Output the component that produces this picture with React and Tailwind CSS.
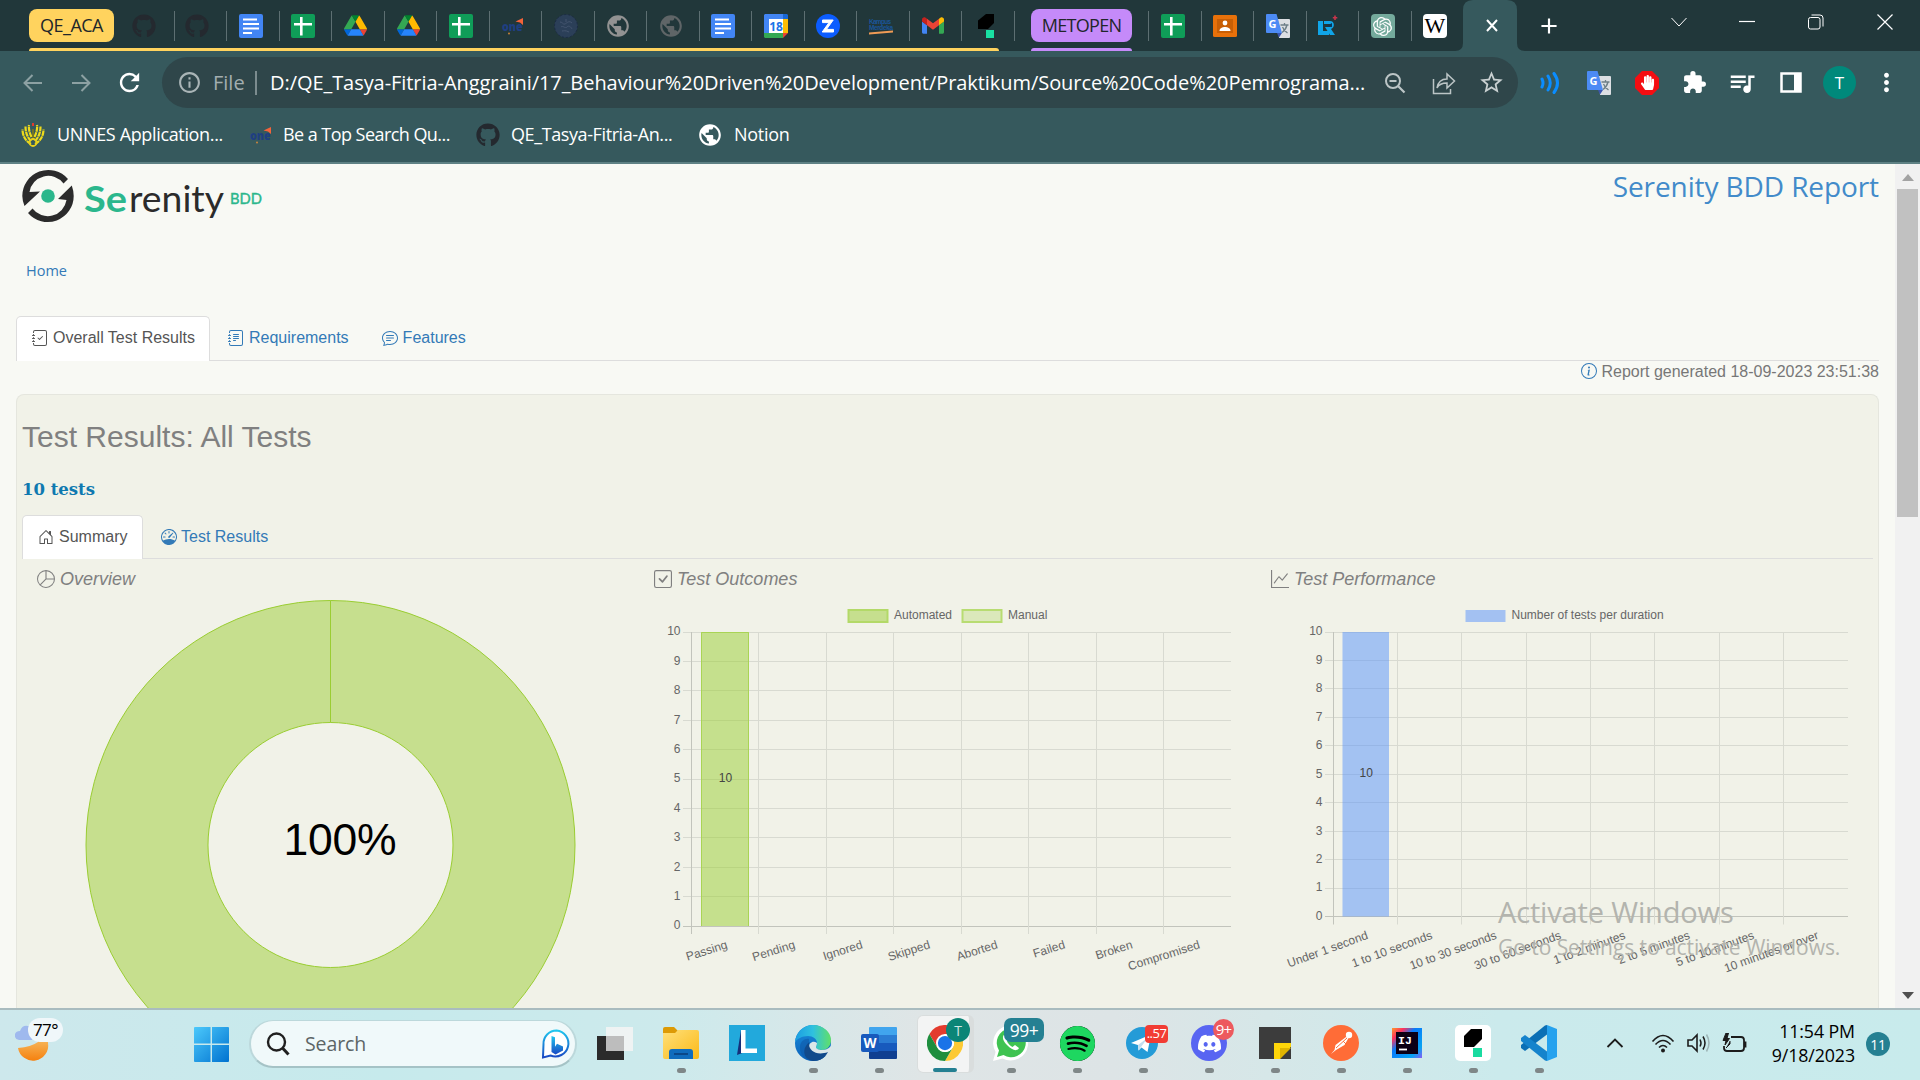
import React from "react";
import { FaGithub, FaHandPaper } from "react-icons/fa";
import {
  MdPublic, MdRefresh, MdInfoOutline, MdStarBorder, MdExtension, MdQueueMusic,
  MdMoreVert, MdAdd,
} from "react-icons/md";
import {
  BsJournalCheck, BsJournalText, BsChatText, BsHouseDoor, BsSpeedometer,
  BsPieChart, BsCheckSquare, BsGraphUp, BsInfoCircle,
} from "react-icons/bs";
import { SiOpenai, SiDiscord, SiSpotify } from "react-icons/si";

const SEGOE = "font-['Open_Sans','Noto_Sans',sans-serif]";
const ARIAL = "font-['Liberation_Sans',Arial,sans-serif]";

/* ---------- favicons ---------- */

const Docs = () => (
  <svg viewBox="0 0 24 24" className="size-6">
    <rect width="24" height="24" rx="2" fill="#4285f4" />
    <path d="M4 5.5h14M4 10h16M4 14.5h16M4 19h9" stroke="#fff" strokeWidth="2.2" />
  </svg>
);
const Sheets = () => (
  <svg viewBox="0 0 24 24" className="size-6">
    <rect width="24" height="24" rx="2" fill="#0f9d58" />
    <path d="M3 10.2h18M10.3 3v18.5" stroke="#fff" strokeWidth="2.6" />
  </svg>
);
const Drive = () => (
  <svg viewBox="0 0 87.3 78" className="w-[23px] h-[21px]">
    <path fill="#0066da" d="m6.6 66.85 3.85 6.65c.8 1.4 1.95 2.5 3.3 3.3l13.75-23.8h-27.5c0 1.55.4 3.1 1.2 4.5z" />
    <path fill="#34a853" d="m43.65 25-13.75-23.8c-1.35.8-2.5 1.9-3.3 3.3l-25.4 44a9.06 9.06 0 0 0 -1.2 4.5h27.5z" />
    <path fill="#ea4335" d="m73.55 76.8c1.35-.8 2.5-1.9 3.3-3.3l1.6-2.75 7.65-13.25c.8-1.4 1.2-2.95 1.2-4.5h-27.502l5.852 11.5z" />
    <path fill="#00832d" d="m43.65 25 13.75-23.8c-1.35-.8-2.9-1.2-4.5-1.2h-18.5c-1.6 0-3.15.45-4.5 1.2z" />
    <path fill="#2684fc" d="m59.8 53h-32.3l-13.75 23.8c1.35.8 2.9 1.2 4.5 1.2h50.8c1.6 0 3.15-.45 4.5-1.2z" />
    <path fill="#ffba00" d="m73.4 26.5-12.7-22c-.8-1.4-1.95-2.5-3.3-3.3l-13.75 23.8 16.15 28h27.45c0-1.55-.4-3.1-1.2-4.5z" />
  </svg>
);
const One = () => (
  <svg viewBox="0 0 24 24" className="size-6">
    <text x="1" y="16.5" fontFamily="Open Sans, sans-serif" fontWeight="800" fontSize="12.5" fill="#1f3f82" textLength="20.5" lengthAdjust="spacingAndGlyphs">one</text>
    <path d="M14.5 7.5l7.5-3.5v7l-3-2.5z" fill="#f4633a" />
    <circle cx="8" cy="19.5" r=".9" fill="#d98a3a" />
  </svg>
);
const Seal = () => (
  <svg viewBox="0 0 24 24" className="size-6">
    <circle cx="12" cy="12" r="11.5" fill="#2b3f58" stroke="#1d2c44" strokeDasharray="2 2" />
    <path d="M6 8c3 0 3 3 5 2s4-4 7-1M7 13c2-2 4 2 6 0s4 0 5 2M8 17c2 0 3-1 7 1M12 5v3" stroke="#44556f" fill="none" strokeWidth="1" />
  </svg>
);
const Calendar = () => (
  <svg viewBox="0 0 24 24" className="size-6">
    <path d="M1 0h18v5H5v14H0V1z" fill="#4285f4" />
    <path d="M19 0h4l1 1v4h-5z" fill="#1967d2" />
    <path d="M19 5h5v14h-5z" fill="#fbbc04" />
    <path d="M0 19h19v5H1l-1-1z" fill="#34a853" />
    <path d="M19 19h5l-5 5z" fill="#ea4335" />
    <path d="M5 5h14v14H5z" fill="#fff" />
    <text x="12" y="16.5" textAnchor="middle" fontFamily="Open Sans, sans-serif" fontWeight="bold" fontSize="12" fill="#1a73e8">18</text>
  </svg>
);
const Zoom = () => (
  <svg viewBox="0 0 24 24" className="size-6">
    <circle cx="12" cy="12" r="12" fill="#0b5cff" />
    <path d="M6.5 6h10.7l-6.7 9.4h7V18H6.2l6.8-9.4H6.5z" fill="#fff" stroke="#fff" strokeWidth="1" />
  </svg>
);
const Kampus = () => (
  <svg viewBox="0 0 26 24" className="h-6 w-[26px] shrink-0">
    <text x="1" y="10" fontFamily="Liberation Sans, sans-serif" fontWeight="bold" fontSize="6.5" fill="#1a5598" textLength="22">Kampus</text>
    <text x="1" y="15.5" fontFamily="Liberation Sans, sans-serif" fontWeight="bold" fontSize="6.5" fill="#1a5598" textLength="24">Merdeka</text>
    <path d="M1 18.5l24-2v2L1 20.5z" fill="#ef9b55" />
  </svg>
);
const Gmail = () => (
  <svg viewBox="52 42 88 66" className="w-[22px] h-[17px]">
    <path fill="#4285f4" d="M58 108h14V74L52 59v43c0 3.32 2.69 6 6 6" />
    <path fill="#34a853" d="M120 108h14c3.32 0 6-2.69 6-6V59l-20 15" />
    <path fill="#fbbc04" d="M120 48v26l20-15v-8c0-7.42-8.47-11.65-14.4-7.2" />
    <path fill="#ea4335" d="M72 74V48l24 18 24-18v26L96 92" />
    <path fill="#c5221f" d="M52 51v8l20 15V48l-5.6-4.2c-5.94-4.45-14.4-.22-14.4 7.2" />
  </svg>
);
const Katalon = () => (
  <svg viewBox="0 0 24 24" className="size-6">
    <path d="M12 0h8v9l-6 6H4V6.5z" fill="#000" />
    <path d="M12 16h8v8h-8z" fill="#19e0a2" />
  </svg>
);
const Classroom = () => (
  <svg viewBox="0 0 24 24" className="size-6">
    <rect y="1" width="24" height="22" rx="1.5" fill="#e8710a" />
    <rect x="4" y="5" width="16" height="14" fill="#c95f05" />
    <circle cx="12" cy="9" r="2.4" fill="#fff" />
    <path d="M6.5 17c0-3 3-4 5.5-4s5.5 1 5.5 4z" fill="#fff" />
  </svg>
);
const Translate = () => (
  <svg viewBox="0 0 24 24" className="size-6">
    <path d="M12 5h11a1 1 0 0 1 1 1v17a1 1 0 0 1-1 1H13z" fill="#dcdfe3" />
    <path d="M1 0h9.5l5.5 19H1a1 1 0 0 1-1-1V1a1 1 0 0 1 1-1z" fill="#4c8bf5" />
    <path d="M11 19h5l-3 4.5z" fill="#3a56b0" />
    <text x="2.5" y="13.5" fontFamily="Open Sans, sans-serif" fontWeight="bold" fontSize="11" fill="#fff">G</text>
    <path d="M14.5 11h8M18.5 9v2M21 11c-.8 3.5-3 6-5 7.5M16.5 13c1 2.5 3 4.500 5 6" stroke="#6d7f88" strokeWidth="1.3" fill="none" />
  </svg>
);
const RLogo = () => (
  <svg viewBox="0 0 24 24" className="size-6">
    <path d="M0 7h5v10h6v4H0zM6 7h6c5 0 5 7 1 8l4 6h-5l-5-8h5c2 0 2-3 0-3H6z" fill="#10a5e8" />
    <path d="M9 12l5-3v4z" fill="#0b3557" />
    <path d="M17 1.5v4.5M14.8 3.7h4.5" stroke="#c8354b" strokeWidth="1.6" />
  </svg>
);
const ChatGpt = () => (
  <div className="flex size-6 items-center justify-center rounded-[4px] rounded-br-none bg-[#74aa9c] text-white">
    <SiOpenai size={19} />
  </div>
);
const Wiki = () => (
  <div className="-ml-px flex size-6 items-center justify-center rounded-[4px] bg-white font-['Liberation_Serif',serif] text-[22px] leading-none tracking-tight text-black">
    W
  </div>
);
const Unnes = () => (
  <svg viewBox="0 0 24 24" className="size-6">
    <path d="M10 21C4 18 1.5 12 1.5 6.5M10 18C6 14 4.5 9 4.5 3.5M10.5 14C8.5 10 7.5 6 8 2M14 21c6-3 8.5-9 8.5-14.5M14 18c4-4 5.5-9 5.5-14.5M13.5 14C15.5 10 16.5 6 16 2" stroke="#eedb1c" strokeWidth="2.2" strokeDasharray="5 .6" fill="none" />
    <path d="M12 6v11" stroke="#8a7d12" strokeWidth="1.5" />
    <circle cx="12" cy="19.5" r="3.5" fill="none" stroke="#e8cf1c" strokeWidth="1.8" />
    <path d="M11 0h2v3h-2z" fill="#e23b2e" />
  </svg>
);

/* ---------- browser chrome ---------- */

const gh = <FaGithub size={24} className="shrink-0 text-[#24292f]" />;
const ghTab = <FaGithub size={24} className="mr-[3px] shrink-0 text-[#24292f]" />;
const tabsA = [
  ghTab, ghTab, <Docs />, <Sheets />, <Drive />, <Drive />, <Sheets />, <One />, <Seal />,
  <MdPublic size={26} className="shrink-0 text-[#929292]" />,
  <MdPublic size={26} className="shrink-0 text-[#5f6567]" />,
  <Docs />, <Calendar />, <Zoom />, <Kampus />, <Gmail />, <Katalon />,
];
const tabsB = [<Sheets />, <Classroom />, <Translate />, <RLogo />, <ChatGpt />, <Wiki />];

function Tab({ children, last }) {
  return (
    <div className={`flex h-[30px] w-[52.5px] shrink-0 items-center border-r pl-[11.5px] ${last ? "border-transparent" : "border-[#5d6f72]"}`}>
      <div className="flex w-6 justify-center">{children}</div>
    </div>
  );
}

function TabStrip() {
  return (
    <div className="flex h-[51px] items-start bg-[#21373a]">
      <div className="ml-[29px] flex h-[51px] w-[970px] shrink-0 flex-col justify-between">
        <div className="flex items-center pt-[9px]">
          <div className={`${SEGOE} mr-[8px] flex h-[33px] w-[85px] shrink-0 items-center justify-center rounded-[8px] bg-[#ffd35e] text-[18px] tracking-[-0.5px] text-[#21262a]`}>
            QE_ACA
          </div>
          {tabsA.map((t, i) => <Tab key={i}>{t}</Tab>)}
        </div>
        <div className="h-[3px] rounded-t-[3px] bg-[#ffd35e]" />
      </div>
      <div className="ml-[32px] flex h-[51px] w-[101px] shrink-0 flex-col justify-between pt-[9px]">
        <div className={`${SEGOE} flex h-[33px] items-center justify-center rounded-[8px] bg-[#c58af9] text-[18px] tracking-[-0.7px] text-[#21262a]`}>
          METOPEN
        </div>
        <div className="h-[3px] rounded-t-[3px] bg-[#c58af9]" />
      </div>
      <div className="ml-[16px] flex shrink-0 pt-[11px]">
        <div className="h-[30px] w-px bg-[#5d6f72]" />
        {tabsB.map((t, i) => <Tab key={i} last={i === 5}>{t}</Tab>)}
      </div>
      <svg viewBox="0 0 70 51" className="-ml-[9px] h-[51px] w-[70px] shrink-0">
        <path d="M0 51q8 0 8-8V10Q8 0 18 0H52q10 0 10 10V43q0 8 8 8z" fill="#36595d" />
        <path d="M32 20l10 11M42 20l-10 11" stroke="#fff" strokeWidth="2" />
      </svg>
      <div className="flex h-[51px] w-[48px] items-center justify-center text-white">
        <MdAdd size={26} />
      </div>
      <div className="ml-auto flex h-[44px] items-center text-white">
        <svg viewBox="0 0 20 20" className="mr-[48px] size-5"><path d="M2.5 6l7.5 8 7.5-8" stroke="#fff" fill="none" /></svg>
        <svg viewBox="0 0 20 20" className="mr-[49px] size-5"><path d="M2 9.5h16" stroke="#fff" strokeWidth="1.2" /></svg>
        <svg viewBox="0 0 20 20" className="mr-[49px] size-5">
          <rect x="2.5" y="5.5" width="11.5" height="11.5" rx="2" stroke="#fff" fill="none" />
          <path d="M5.5 3h8.5q3 0 3 3v8.5" stroke="#fff" fill="none" />
        </svg>
        <svg viewBox="0 0 20 20" className="mr-[25px] size-5"><path d="M2.5 2.5l15 15M17.5 2.5l-15 15" stroke="#fff" fill="none" strokeWidth="1.2" /></svg>
      </div>
    </div>
  );
}

function Toolbar() {
  return (
    <div className="flex h-[57px] items-start bg-[#36595d] pt-[6px]">
      <div className="flex h-[51px] w-[162px] shrink-0 items-center">
        <svg viewBox="0 0 20 20" className="ml-[23px] size-5"><path d="M19 10H2M9.5 2L1.5 10l8 8" stroke="#8da1a3" strokeWidth="2" fill="none" /></svg>
        <svg viewBox="0 0 20 20" className="ml-[28px] size-5"><path d="M1 10h17M10.5 2l8 8-8 8" stroke="#8da1a3" strokeWidth="2" fill="none" /></svg>
        <MdRefresh size={29} className="ml-[24px] text-white" />
      </div>
      <div className="flex h-[51px] w-[1356px] shrink-0 items-center rounded-full bg-[#2f464a]">
        <MdInfoOutline size={25} className="ml-[15px] shrink-0 text-[#aab5b7]" />
        <div className={`${SEGOE} ml-[11px] w-[32px] shrink-0 text-[20px] text-[#a3aeb0]`}>File</div>
        <div className="ml-[10px] h-6 w-[2px] bg-[#7c8c8f]" />
        <div className={`${SEGOE} ml-[13px] w-[1104px] shrink-0 whitespace-nowrap text-[20px] tracking-[-0.06px] text-white`}>
          D:/QE_Tasya-Fitria-Anggraini/17_Behaviour%20Driven%20Development/Praktikum/Source%20Code%20Pemrograma...
        </div>
        <svg viewBox="0 0 22 22" className="ml-[10px] size-[22px] shrink-0">
          <circle cx="9" cy="9" r="7" stroke="#bcc5c6" strokeWidth="2" fill="none" />
          <path d="M14 14l6.500 6.5M5.5 9h7" stroke="#bcc5c6" strokeWidth="2.2" />
        </svg>
        <svg viewBox="0 0 24 24" className="ml-[26px] size-6 shrink-0">
          <path d="M1.5 8v14.5h17V18M5 17c1-6 4-9 10-9V3l7.5 7-7.5 7v-5c-5 0-8 1-10 5z" stroke="#bcc5c6" strokeWidth="1.5" fill="none" />
        </svg>
        <MdStarBorder size={27} className="ml-[22px] shrink-0 text-[#c9d0d1]" />
      </div>
      <div className="flex h-[51px] flex-1 items-center">
        <svg viewBox="0 0 22 22" className="ml-[22px] size-[22px]">
          <path d="M2 7q2 4 0 8M8 4q4.5 7 0 14M14 1.5q7 9.5 0 19" stroke="#0a8dff" strokeWidth="3" fill="none" strokeLinecap="round" />
        </svg>
        <div className="ml-[25px]"><Translate /></div>
        <div className="relative ml-[24px] flex size-6 items-center justify-center">
          <svg viewBox="0 0 24 24" className="absolute size-6"><path d="M7 0h10l7 7v10l-7 7H7l-7-7V7z" fill="#f40d12" /></svg>
          <FaHandPaper size={15} className="relative text-white" />
        </div>
        <MdExtension size={25} className="ml-[23px] text-white" />
        <MdQueueMusic size={30} className="ml-[20px] text-white" />
        <svg viewBox="0 0 22 21" className="ml-[23px] h-[21px] w-[22px]"><path d="M1.5 1.5h19v18h-19z" stroke="#fff" strokeWidth="2.5" fill="none" /><path d="M14 1h7v19h-7z" fill="#fff" /></svg>
        <div className={`${SEGOE} ml-[21px] flex size-[33px] items-center justify-center rounded-full bg-[#00897b] text-[17px] text-white`}>T</div>
        <MdMoreVert size={29} className="ml-[16px] text-white" />
      </div>
    </div>
  );
}

function Bookmarks() {
  const t = `${SEGOE} whitespace-nowrap text-[18px] text-white`;
  return (
    <div className="flex h-[56px] items-center border-b-2 border-[#5f8184] bg-[#36595d] pb-px">
      <div className="ml-[21px] flex w-[228px] items-center gap-[12px]"><Unnes /><span className={`${t} tracking-[-0.35px]`}>UNNES Application...</span></div>
      <div className="flex w-[227px] items-center gap-[10px]"><One /><span className={`${t} tracking-[-0.55px]`}>Be a Top Search Qu...</span></div>
      <div className="flex w-[222px] items-center gap-[11px]">{gh}<span className={`${t} tracking-[-0.4px]`}>QE_Tasya-Fitria-An...</span></div>
      <div className="flex items-center gap-[11px]"><MdPublic size={26} className="-ml-px text-white" /><span className={`${t} tracking-[-0.3px]`}>Notion</span></div>
    </div>
  );
}

/* ---------- report ---------- */

function SerenityLogo() {
  return (
    <svg viewBox="0 0 260 64" className="h-[64px] w-[260px]">
      <path d="M0.3 30A26 26 0 0 1 46 13L41.5 17.5A19 19 0 0 0 7.5 26L18 25.5 2.5 40Q0.3 34 0.3 30z" fill="#2b2b2b" />
      <path d="M51.7 30A26 26 0 0 1 6 47L10.5 42.5A19 19 0 0 0 44.5 34L36 33 49.8 19.5Q51.7 25 51.7 30z" fill="#2b2b2b" />
      <circle cx="26" cy="30" r="6.8" fill="#2bb78c" />
      <text y="45.5" fontFamily="Lato, sans-serif" fontSize="36">
        <tspan x="62" fontWeight="bold" fill="#2bb78c" textLength="43" lengthAdjust="spacingAndGlyphs">Se</tspan>
        <tspan x="107" fill="#2b2b2b" textLength="95" lengthAdjust="spacingAndGlyphs">renity</tspan>
      </text>
      <text x="208" y="37.5" fontFamily="Lato, sans-serif" fontSize="15.5" fill="#2bb78c" stroke="#2bb78c" strokeWidth=".4" textLength="32" lengthAdjust="spacingAndGlyphs">BDD</text>
    </svg>
  );
}

function BarChart({ width, x0, step, bottom, tickRight, top, labels, angle, bar, valueY, legend, border, fill }) {
  const x1 = x0 + step * 8;
  const dy = (bottom - top) / 10;
  const ys = Array.from({ length: 11 }, (_, i) => top + i * dy);
  const snap = (v) => Math.floor(v) + 0.5;
  return (
    <svg width={width} height="400" viewBox={`0 0 ${width} 400`} fontFamily="Liberation Sans, Arial, sans-serif" fontSize="12" fill="#666">
      {legend.map((l) => (
        <g key={l.label}>
          <rect x={l.x} y="12" width={l.w} height="12" fill={l.fill} stroke={l.stroke} strokeWidth={l.sw} />
          <text x={l.tx} y="21">{l.label}</text>
        </g>
      ))}
      {ys.map((y, i) => (
        <g key={i}>
          <path d={`M${x0 - 8} ${snap(y)}H${x1}`} stroke={i === 10 ? "#c2c4bc" : "#d8dad1"} />
          <text x={tickRight} y={y + 3.4} textAnchor="end">{10 - i}</text>
        </g>
      ))}
      {labels.map((l, i) => (
        <g key={l}>
          <path d={`M${snap(x0 + i * step)} ${top}V${bottom + 8}`} stroke={i === 0 ? "#c2c4bc" : "#d8dad1"} />
          <text textAnchor="end" transform={`translate(${x0 + (i + 0.5) * step + 3.5} ${bottom + 22}) rotate(${angle})`}>{l}</text>
        </g>
      ))}
      <rect x={bar.x} y={top} width={bar.w} height={bottom - top} fill={fill} />
      {border && <path d={`M${bar.x + 0.5} ${bottom}V${top + 0.5}H${bar.x + bar.w - 0.5}V${bottom}`} stroke={border} fill="none" />}
      <text x={bar.x + bar.w / 2 + 0.5} y={valueY} textAnchor="middle" fill="#444">10</text>
    </svg>
  );
}

function SectionTitle({ icon, children }) {
  return (
    <div className="flex h-[39px] items-center gap-[5px] pl-[15px] pt-px text-[18px] italic leading-none text-[#808080]">
      {icon}
      <span>{children}</span>
    </div>
  );
}

function Report() {
  return (
    <div className={`${ARIAL} flex h-[844px] overflow-hidden bg-[#f8f9f4]`}>
      <div className="flex w-[1895px] flex-col pl-[16px] pr-[16px]">
        <div className="flex h-[89px] shrink-0 items-start justify-between">
          <div className="ml-[6px] mt-[2px]"><SerenityLogo /></div>
          <div className={`${SEGOE} whitespace-nowrap text-[28px] leading-[44px] tracking-[-0.1px] text-[#428bca]`}>Serenity BDD Report</div>
        </div>
        <div className={`${SEGOE} h-[63px] shrink-0 pl-[10px] pt-[7px] text-[14.5px] leading-[21px] text-[#337ab7]`}>Home</div>
        <div className="flex h-[45px] shrink-0 items-stretch border-b border-[#dddddd] text-[16px]">
          <div className="-mb-px flex w-[194px] shrink-0 items-center gap-[5px] rounded-t-[5px] border border-b-0 border-[#dddddd] bg-white pb-[2px] pl-[15px] text-[#555]">
            <BsJournalCheck size={16} className="shrink-0" /><span className="whitespace-nowrap">Overall Test Results</span>
          </div>
          <div className="ml-[18px] flex items-center gap-[5px] pb-px text-[#337ab7]"><BsJournalText size={16} />Requirements</div>
          <div className="ml-[33px] flex items-center gap-[5px] pb-px text-[#337ab7]"><BsChatText size={16} />Features</div>
        </div>
        <div className="flex h-[33px] shrink-0 items-start justify-end gap-[4px] pt-[2px] text-[16px] leading-[18px] text-[#777]">
          <BsInfoCircle size={16} className="text-[#337ab7]" />
          <span>Report generated 18-09-2023 23:51:38</span>
        </div>
        <div className="flex h-[640px] shrink-0 flex-col rounded-t-[8px] border border-b-0 border-[#e5e6de] bg-[#f1f2e8] px-[5px]">
          <div className="h-[78px] shrink-0 pt-[24px] text-[30px] leading-[36px] text-[#808080]">Test Results: All Tests</div>
          <div className="h-[42px] shrink-0 pt-[5px] font-['DejaVu_Serif','Noto_Serif',serif] text-[16.5px] font-bold leading-[24px] text-[#0f79b0]">10 tests</div>
          <div className="flex h-[44px] shrink-0 items-stretch border-b border-[#dddddd] text-[16px]">
            <div className="-mb-px flex w-[121px] shrink-0 items-center gap-[5px] rounded-t-[5px] border border-b-0 border-[#dddddd] bg-white pb-[2px] pl-[15px] text-[#555]">
              <BsHouseDoor size={16} className="shrink-0" />Summary
            </div>
            <div className="ml-[18px] flex items-center gap-[4px] text-[#337ab7]"><BsSpeedometer size={16} />Test Results</div>
          </div>
          <div className="flex shrink-0">
            <div className="w-[617px] shrink-0">
              <SectionTitle icon={<BsPieChart size={18} />}>Overview</SectionTitle>
              <svg width="617" height="420" viewBox="22 598 617 420">
                <path d="M330.5 600.5a244.5 244.5 0 1 0 .01 0zM330.5 722.5a122.5 122.5 0 1 1-.01 0z" fill="#c6df8e" stroke="#9acd32" fillRule="evenodd" />
                <path d="M330.5 600.5v122" stroke="#9acd32" />
                <text x="283.5" y="855" fontFamily="Liberation Sans, Arial, sans-serif" fontSize="44.5" fill="#000" textLength="113">100%</text>
              </svg>
            </div>
            <div className="w-[617px] shrink-0">
              <SectionTitle icon={<BsCheckSquare size={18} />}>Test Outcomes</SectionTitle>
              <div className="pl-px">
                <BarChart
                  width={615} x0={51} step={67.5} top={34} bottom={328} tickRight={40.5} angle={-17.5}
                  labels={["Passing", "Pending", "Ignored", "Skipped", "Aborted", "Failed", "Broken", "Compromised"]}
                  bar={{ x: 61, w: 48 }} valueY={184} fill="rgba(154,205,50,.5)" border="#a9d455"
                  legend={[
                    { x: 208.5, w: 39, tx: 254, label: "Automated", fill: "#c6df8e", stroke: "#b3d968", sw: 2 },
                    { x: 322.5, w: 39, tx: 368, label: "Manual", fill: "#dbe8bb", stroke: "#b8dc72", sw: 2 },
                  ]}
                />
              </div>
            </div>
            <div className="w-[616px] shrink-0">
              <SectionTitle icon={<BsGraphUp size={18} />}>Test Performance</SectionTitle>
              <BarChart
                width={614} x0={77} step={64.375} top={34} bottom={318.5} tickRight={66.5} angle={-20}
                labels={["Under 1 second", "1 to 10 seconds", "10 to 30 seconds", "30 to 60 seconds", "1 to 2 minutes", "2 to 5 minutes", "5 to 10 minutes", "10 minutes or over"]}
                bar={{ x: 86.5, w: 46.5 }} valueY={179} fill="rgba(85,145,252,.5)"
                legend={[{ x: 209.5, w: 40, tx: 255.5, label: "Number of tests per duration", fill: "#a3c1f2", stroke: "none", sw: 0 }]}
              />
            </div>
          </div>
        </div>
      </div>
      <div className="flex w-[25px] flex-col items-center bg-[#f1f1f1]">
        <svg viewBox="0 0 12 7" className="mt-[10px] h-[7px] w-[12px] shrink-0"><path d="M0 7l6-7 6 7z" fill="#a3a3a3" /></svg>
        <div className="mt-[8px] h-[328px] w-[21px] bg-[#c1c1c1]" />
        <svg viewBox="0 0 12 7" className="mb-[9px] mt-auto h-[7px] w-[12px] shrink-0"><path d="M0 0l6 7 6-7z" fill="#505050" /></svg>
      </div>
    </div>
  );
}

/* ---------- taskbar ---------- */

function TaskApp({ children, dot = true }) {
  return (
    <div className="flex h-[70px] w-[66px] shrink-0 flex-col items-center pt-[15px]">
      <div className="relative flex size-9 items-center justify-center">{children}</div>
      {dot && <div className="mt-[7px] h-[5px] w-[9px] rounded-full bg-[#7f8788]" />}
    </div>
  );
}

const Explorer = () => (
  <svg viewBox="0 0 36 36" className="size-9">
    <path d="M0 4q0-2 2-2h9l4 4v6H0z" fill="#dd9a05" />
    <defs><linearGradient id="fold" x1="0" y1="0" x2="1" y2="1"><stop offset="0" stopColor="#ffe07a" /><stop offset="1" stopColor="#fbb917" /></linearGradient></defs>
    <path d="M0 8h12l3-3h19q2 0 2 2v25q0 2-2 2H2q-2 0-2-2z" fill="url(#fold)" />
    <path d="M6 34V27q0-3 3-3h18q3 0 3 3v7z" fill="#0f6cbd" />
    <path d="M11 29h14" stroke="#0a3d78" strokeWidth="1.5" />
  </svg>
);
const LApp = () => (
  <svg viewBox="0 0 36 36" className="size-9">
    <path d="M0 0h36v36H0z" fill="#22a9dc" />
    <path d="M12 5L8 30l8-3z" fill="#16307a" />
    <path d="M12 5h4.5v18.5H28V28H12z" fill="#fff" />
  </svg>
);
const Edge = () => (
  <svg viewBox="0 0 36 36" className="size-9">
    <defs>
      <linearGradient id="eg" x1="0" y1="0" x2="1" y2="0"><stop offset="0" stopColor="#1b9de2" /><stop offset=".5" stopColor="#2fc1df" /><stop offset="1" stopColor="#61e067" /></linearGradient>
      <linearGradient id="eb" x1="0" y1="0" x2="0" y2="1"><stop offset="0" stopColor="#1b8ddb" /><stop offset="1" stopColor="#0b62ba" /></linearGradient>
    </defs>
    <circle cx="18" cy="18" r="18" fill="url(#eb)" />
    <path d="M0 17C1 7 9 0 18 0c10 0 18 7 18 15 0 6-4 10-9 10-4 0-6-1-6-3 0-1 1-2 1-4 0-4-4-7-9-7-6 0-11 3-13 6z" fill="url(#eg)" />
    <path d="M14 18c-3 8 3 17 14 15-9 6-24 2-23-12 1-5 5-8 9-7z" fill="#0f57a6" opacity=".55" />
    <path d="M22 18c0 2-1 3-1 4 0 2 3 3 6 3 3 0 6-1 9-4v6l-5 4-8-1c-5-1-9-4-9-8s4-7 8-4z" fill="#dbe7e9" />
    <path d="M14 19c0 7 8 12 19 8-3 6-8 9-15 9-8-1-11-9-7-15 1-2 2-3 4-4-1 1-1 2-1 2z" fill="#114a8b" />
  </svg>
);
const Word = () => (
  <svg viewBox="0 0 36 36" className="size-9">
    <path d="M8 3q0-1 1-1h26q1 0 1 1v7H8z" fill="#41a5ee" /><path d="M8 10h28v8H8z" fill="#2b7cd3" />
    <path d="M8 18h28v8H8z" fill="#185abd" /><path d="M8 26h28v7q0 1-1 1H9q-1 0-1-1z" fill="#103f91" />
    <rect y="9" width="18" height="18" rx="2" fill="#185abd" />
    <text x="9" y="23" textAnchor="middle" fontFamily="Open Sans, sans-serif" fontWeight="bold" fontSize="13.5" fill="#fff">W</text>
  </svg>
);
const Chrome = () => (
  <svg viewBox="0 0 48 48" className="size-9">
    <circle cx="24" cy="24" r="24" fill="#fff" />
    <path d="M24 12h20.8A24 24 0 0 0 3.2 12l10.4 18z" fill="#e33b2e" />
    <path d="M34.4 30L24 48A24 24 0 0 0 44.8 12H24a12 12 0 0 1 10.4 18z" fill="#fcc934" />
    <path d="M13.6 30L3.2 12A24 24 0 0 0 24 48l10.4-18a12 12 0 0 1-20.8 0z" fill="#1e8e3e" />
    <circle cx="24" cy="24" r="12" fill="#fff" /><circle cx="24" cy="24" r="9.5" fill="#1a73e8" />
  </svg>
);
const WhatsApp = () => (
  <svg viewBox="0 0 36 36" className="size-9">
    <path d="M0 36l2.6-9A17.5 17.5 0 1 1 9.5 33.5z" fill="#fff" />
    <path d="M4 32l2-6.5A14.5 14.5 0 1 1 10.5 30z" fill="#3fc351" />
    <path d="M12 9c-3 2-3 6 2 11s10 7 12 3l-4-3-2.5 2c-2-1-5-4-5.5-6l1.7-2z" fill="#fff" />
  </svg>
);
const Telegram = () => (
  <svg viewBox="0 0 36 36" className="size-9">
    <circle cx="17" cy="18" r="16" fill="#249bd7" />
    <path d="M6 18L26 9.5 22.5 27l-6-4.5-3 3-.6-5.5z" fill="#fff" />
    <path d="M13 20l10-7.5-7 9.5-2.5 3.5z" fill="#c3ddef" />
  </svg>
);
const Sticky = () => (
  <svg viewBox="0 0 36 36" className="size-9">
    <path d="M2 2h32v32H2z" fill="#3c3c3c" />
    <path d="M34 18v4l-11 12h-6V18z" fill="#ffd60a" />
    <path d="M34 22v12H23z" fill="#3a3a3a" /><path d="M23 34V23h11z" fill="#e0b400" />
  </svg>
);
const Postman = () => (
  <svg viewBox="0 0 36 36" className="size-9">
    <circle cx="18" cy="18" r="18" fill="#ff6c37" />
    <circle cx="26" cy="10" r="3.2" fill="#fff" />
    <path d="M23 12L12.5 20l-1 5L8 29l5-4 8.5-5 4-7z" fill="#fff" />
    <path d="M24 13L13 23M20 16l3 3" stroke="#ff6c37" strokeWidth="1" />
  </svg>
);
const IntelliJ = () => (
  <svg viewBox="0 0 36 36" className="size-9">
    <defs><linearGradient id="ij" x1="0" y1="0" x2="1" y2="1"><stop offset="0" stopColor="#fe9a2e" /><stop offset=".2" stopColor="#fe315d" /><stop offset=".4" stopColor="#087cfa" /><stop offset=".8" stopColor="#07a3f2" /><stop offset="1" stopColor="#8a5cf5" /></linearGradient></defs>
    <path d="M3 3h30v30H3z" fill="url(#ij)" />
    <path d="M7 7h22v22H7z" fill="#0b0014" />
    <path d="M10 24.5h8" stroke="#fff" strokeWidth="1.8" />
    <text x="9" y="18.5" fontFamily="Liberation Mono, monospace" fontWeight="bold" fontSize="11.5" fill="#fff">IJ</text>
  </svg>
);
const VSCode = () => (
  <svg viewBox="0 0 36 36" className="size-9">
    <path d="M26 0v9.5L4 26 0 23v-3L24 .5z" fill="#0b6fb5" />
    <path d="M26 36v-9.5L4 10 0 13v3l24 19.5z" fill="#1583cc" />
    <path d="M26 0l10 4v28l-10 4z" fill="#26a2ee" />
  </svg>
);

function Taskbar() {
  return (
    <div className="flex h-[72px] items-start border-t-2 border-[#a9bcbf] bg-[linear-gradient(90deg,#cde8ec_0%,#c6eaec_20%,#cdeaec_35%,#dfe5e6_48%,#dde4e6_58%,#d6e7e8_66%,#cbeaec_78%,#c8ebec_100%)]">
      <div className="relative ml-[15px] mt-[11px] h-[52px] w-[48px] shrink-0">
        <svg viewBox="0 0 48 52" className="h-[52px] w-[48px]">
          <defs><linearGradient id="moon" x1="0" y1="0" x2="0" y2="1"><stop offset="0" stopColor="#f7c873" /><stop offset="1" stopColor="#f5810f" /></linearGradient></defs>
          <path d="M33 14v8a15 15 0 0 1-30 5q13-1 20-6v-9z" fill="url(#moon)" />
          <path d="M4 19q-5-1-4-6 1-3 5-3 2-6 8-5 4 1 5 6l-1 8z" fill="#9fb9ee" />
        </svg>
        <div className={`${SEGOE} absolute left-[13px] top-[-3px] flex h-[24px] w-[35px] items-center justify-center rounded-full bg-[#f0f7fa] text-[17px] tracking-[-0.5px] text-black`}>77°</div>
      </div>
      <svg viewBox="0 0 36 36" className="ml-[131px] mt-[17px] size-[35px] shrink-0">
        <defs><linearGradient id="win" x1="0" y1="0" x2="1" y2="1"><stop offset="0" stopColor="#4cc9fb" /><stop offset="1" stopColor="#0072d0" /></linearGradient></defs>
        <path d="M0 1q0-1 1-1h16v17H0zM18.5 0H35q1 0 1 1v16H18.5zM0 18.5h17V36H1q-1 0-1-1zM18.5 18.5H36V35q0 1-1 1H18.5z" fill="url(#win)" />
      </svg>
      <div className="ml-[20px] mt-[10px] flex h-[48px] w-[328px] shrink-0 items-center rounded-full border-2 border-t border-[#bcd8db] border-b-[#a5c3c6] bg-[#f0f9fa]">
        <svg viewBox="0 0 24 24" className="ml-[15px] size-6"><circle cx="10.5" cy="10" r="8.5" stroke="#1f1f1f" strokeWidth="2.4" fill="none" /><path d="M16.5 16l6 6.5" stroke="#1f1f1f" strokeWidth="3" /></svg>
        <span className={`${SEGOE} ml-[15px] pt-px text-[19.5px] tracking-[-0.1px] text-[#5c6566]`}>Search</span>
        <svg viewBox="0 0 30 30" className="ml-auto mr-[4px] size-[30px]">
          <defs><linearGradient id="bing" x1="0" y1="0" x2="0" y2="1"><stop offset="0" stopColor="#1fc6ee" /><stop offset="1" stopColor="#1a49c4" /></linearGradient></defs>
          <path d="M15.5 1.5A13 13 0 1 1 9.5 26.5L2 28.5 2.5 15A13 13 0 0 1 15.5 1.5z" fill="#fff" stroke="url(#bing)" strokeWidth="2" />
          <path d="M10.5 7l3.5 1.3v9.5l2-3 6 2.7v4l-7.5 4-4-2.5z" fill="url(#bing)" />
        </svg>
      </div>
      <svg viewBox="0 0 36 36" className="ml-[20px] mt-[15px] size-9 shrink-0">
        <path d="M0 11h27v24H0z" fill="#2b2b2b" /><path d="M9 2h27v24H9z" fill="#f4f4f4" fillOpacity=".85" /><path d="M9 11h18v15H9z" fill="#bdbdbd" />
      </svg>
      <div className="ml-[15px] flex">
        <TaskApp><Explorer /></TaskApp>
        <TaskApp dot={false}><LApp /></TaskApp>
        <TaskApp><Edge /></TaskApp>
        <TaskApp><Word /></TaskApp>
        <div className="flex h-[70px] w-[66px] shrink-0 justify-center pt-[5px]">
          <div className="-ml-[5px] mr-[-5px] flex h-[58px] w-[57px] flex-col items-center rounded-[6px] border border-r-[5px] border-[#d9dddd] bg-[#f3f4f4] pt-[9px]">
            <div className="relative ml-[4px] size-9"><Chrome />
              <div className={`${SEGOE} absolute left-[19px] top-[-7px] flex size-6 items-center justify-center rounded-full bg-[#0b8577] text-[14px] text-[#cfe6e3]`}>T</div>
            </div>
            <div className="ml-[4px] mt-[7px] h-[5px] w-6 rounded-full bg-[#258092]" />
          </div>
        </div>
        <TaskApp><WhatsApp />
          <div className={`${SEGOE} absolute left-[11px] top-[-7px] flex h-[24px] w-[40px] items-center justify-center rounded-[7px] bg-[#258092] text-[17.5px] tracking-[-0.5px] text-white`}>99+</div>
        </TaskApp>
        <TaskApp><div className="rounded-full bg-black"><SiSpotify size={35} className="text-[#1ed760]" /></div></TaskApp>
        <TaskApp><Telegram />
          <div className={`${SEGOE} absolute left-[20px] top-0 flex h-[18px] w-[23px] items-center justify-center rounded-[4px] bg-[#f23c34] text-[13px] tracking-[-0.5px] text-white`}>..57</div>
        </TaskApp>
        <TaskApp><div className="flex size-9 items-center justify-center rounded-full bg-[#5865f2] text-white"><SiDiscord size={23} /></div>
          <div className={`${SEGOE} absolute left-[22px] top-[-6px] flex size-[21px] items-center justify-center rounded-full bg-[#ed5a5e] text-[15px] tracking-[-0.8px] text-white`}>9+</div>
        </TaskApp>
        <TaskApp><Sticky /></TaskApp>
        <TaskApp><Postman /></TaskApp>
        <TaskApp><IntelliJ /></TaskApp>
        <TaskApp><div className="flex size-9 items-center justify-center rounded-[5px] bg-white"><svg viewBox="0 0 36 36" className="size-9"><path d="M16 4h11v10l-8 8H9V11z" fill="#000" /><path d="M18 23h9v9h-9z" fill="#19dba0" /></svg></div></TaskApp>
        <TaskApp><VSCode /></TaskApp>
      </div>
      <svg viewBox="0 0 18 10" className="ml-[34px] mt-[28px] h-[10px] w-[18px] shrink-0"><path d="M1.5 9L9 1.5 16.5 9" stroke="#1c1c1c" strokeWidth="1.8" fill="none" /></svg>
      <svg viewBox="0 0 24 20" className="ml-[27px] mt-[23px] h-5 w-6 shrink-0">
        <path d="M1.5 8.5Q12-3.5 22.5 8.5M4.5 11.5q7.5-8 15 0M8 14.5q4-4 8 0" stroke="#1c1c1c" strokeWidth="1.6" fill="none" /><circle cx="12" cy="17.5" r="2" fill="#1c1c1c" />
      </svg>
      <svg viewBox="0 0 26 22" className="ml-[11px] mt-[22px] h-[22px] w-[26px] shrink-0">
        <path d="M2 8h4l5-5v16l-5-5H2z" stroke="#1c1c1c" strokeWidth="1.6" fill="none" /><path d="M14 7.5q2 3.5 0 7M17 4.5q4 6.5 0 13" stroke="#1c1c1c" strokeWidth="1.5" fill="none" /><path d="M20.5 2.5q5 8.5 0 17" stroke="#9db4b6" strokeWidth="1.5" fill="none" />
      </svg>
      <svg viewBox="0 0 26 22" className="ml-[10px] mt-[23px] h-[22px] w-[26px] shrink-0">
        <path d="M9 4h10q3 0 3 3v8q0 3-3 3H5q-3 0-3-3v-2M22.5 9.5h1v4h-1z" stroke="#1c1c1c" strokeWidth="1.8" fill="none" /><path d="M4 0L1 7.5h3L3 12l4.5-6.5H5L6.5 0zM4 15l4-4V8" fill="#1c1c1c" stroke="#1c1c1c" />
      </svg>
      <div className={`${SEGOE} mt-[9px] flex-1 whitespace-nowrap text-right text-[17.8px] leading-[24px] tracking-[-0.1px] text-black`}>
        <div>11:54 PM</div><div>9/18/2023</div>
      </div>
      <div className={`${SEGOE} ml-[11px] mr-[30px] mt-[22px] flex size-6 shrink-0 items-center justify-center rounded-full bg-[#258092] text-[14px] tracking-[-0.3px] text-white`}>11</div>
    </div>
  );
}

export default function App() {
  return (
    <div className="relative flex h-[1080px] w-[1920px] flex-col overflow-hidden">
      <TabStrip />
      <Toolbar />
      <Bookmarks />
      <Report />
      <Taskbar />
      <div className={`${SEGOE} pointer-events-none absolute left-[1498px] top-[892px] whitespace-nowrap text-[#b3b4ae]`}>
        <div className="text-[29px] leading-[40px] tracking-[-0.15px]">Activate Windows</div>
        <div className="text-[21px] leading-[31px] tracking-[-0.05px]">Go to Settings to activate Windows.</div>
      </div>
    </div>
  );
}
